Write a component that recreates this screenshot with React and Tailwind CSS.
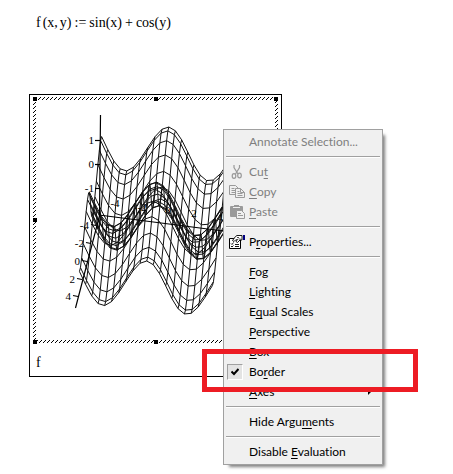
import React, { useState } from "react";

const STEPS = 20;
const Z_UNIT = 24.5;

// corners of the plot floor (z = -2)
const floor = {
  backLeft: [65, 119],
  backRight: [198, 135],
  frontLeft: [45, 207],
  frontRight: [178, 221],
};

const project = (x, y, z) => {
  const u = (y + 5) / 10;
  const v = (x + 5) / 10;
  const mix = (i) =>
    (1 - v) * ((1 - u) * floor.backLeft[i] + u * floor.backRight[i]) +
    v * ((1 - u) * floor.frontLeft[i] + u * floor.frontRight[i]);
  const rise = (z + 2) * Z_UNIT;
  return [mix(0) + rise * 0.045, mix(1) - rise];
};

const toPoints = (list) =>
  list.map(([a, b]) => `${a.toFixed(2)},${b.toFixed(2)}`).join(" ");

const range = Array.from({ length: STEPS + 1 }, (_, i) => -5 + (i * 10) / STEPS);
const f = (x, y) => Math.sin(x) + Math.cos(y);

const meshLines = [
  ...range.map((x) => toPoints(range.map((y) => project(x, y, f(x, y))))),
  ...range.map((y) => toPoints(range.map((x) => project(x, y, f(x, y))))),
];

const zTicks = [
  { label: "1", x: 67, y: 43 },
  { label: "0", x: 67, y: 67 },
  { label: "-1", x: 67, y: 91 },
];

const sideTicks = [
  { label: "-4", x: 63, y: 128 },
  { label: "-2", x: 58, y: 146 },
  { label: "0", x: 54, y: 164 },
  { label: "2", x: 49, y: 182 },
  { label: "4", x: 45, y: 199 },
];

const innerTicks = [
  { label: "-4", x: 82, y: 110 },
  { label: "-2", x: 109, y: 114 },
  { label: "0", x: 135, y: 117 },
  { label: "2", x: 161, y: 120 },
  { label: "4", x: 187, y: 124 },
];

const handles = [
  [0, 0], [121, 0], [241, 0],
  [0, 121], [241, 121],
  [0, 243], [121, 243], [241, 243],
];

const SurfacePlot = () => (
  <svg width="245" height="247" viewBox="0 0 245 247" className="block" role="img" aria-label="f">
    <defs>
      <pattern id="hatch" width="4" height="4" patternUnits="userSpaceOnUse">
        <path d="M3 0h1v1h-1zM2 1h1v1h-1zM1 2h1v1h-1zM0 3h1v1h-1z" fill="#000" />
      </pattern>
    </defs>
    <path
      d="M0 0H245V246H0ZM3 3V243H242V3Z"
      fill="url(#hatch)"
      fillRule="evenodd"
      shapeRendering="crispEdges"
    />
    <g shapeRendering="crispEdges">
      {handles.map(([x, y]) => (
        <rect key={`${x}-${y}`} x={x} y={y} width="4" height="4" />
      ))}
    </g>
    <g fill="none" stroke="#111" strokeWidth="1">
      {meshLines.map((points, i) => (
        <polyline key={i} points={points} />
      ))}
    </g>
    <g fill="none" stroke="#000" strokeWidth="1.2">
      <path d="M67.5 18L66.5 119L42.5 211" />
      <path d="M66 118L198 135" />
      {zTicks.map((t) => (
        <path key={t.label} d={`M${t.x - 5} ${t.y + 0.5}h5`} />
      ))}
      {sideTicks.map((t) => (
        <path key={t.label} d={`M${t.x - 5} ${t.y - 0.5}l5 1`} />
      ))}
    </g>
    <g className="font-['Liberation_Serif',serif] text-[11px]" fill="#000">
      {zTicks.map((t) => (
        <text key={t.label} x={t.x - 6} y={t.y + 4} textAnchor="end">{t.label}</text>
      ))}
      {sideTicks.map((t) => (
        <text key={t.label} x={t.x - 7} y={t.y + 4} textAnchor="end">{t.label}</text>
      ))}
      {innerTicks.map((t) => (
        <text key={t.label} x={t.x} y={t.y} textAnchor="middle">{t.label}</text>
      ))}
    </g>
  </svg>
);

const CutIcon = () => (
  <svg width="16" height="16" viewBox="0 0 16 16" fill="none" stroke="#9a9a9a" strokeWidth="1.2">
    <path d="M5 1v2.5L9 10M10.500 1v2.500L6.500 10" />
    <ellipse cx="5" cy="12" rx="1.800" ry="2.300" />
    <ellipse cx="10.500" cy="11.500" rx="1.800" ry="2.300" />
  </svg>
);

const CopyIcon = () => (
  <svg width="16" height="16" viewBox="0 0 16 16" fill="#f0f0f0" stroke="#9a9a9a">
    <path d="M.5 1.500h6l3 3v6h-9z" />
    <path d="M2.500 4.500h3M2.500 6.500h4M2.500 8.500h4" />
    <path d="M6.500 4.500h5l4 4v5h-9z" />
    <path d="M11.500 4.500v4h4M8.500 7.500h2M8.500 9.500h5M8.500 11.500h5" fill="none" />
  </svg>
);

const PasteIcon = () => (
  <svg width="16" height="16" viewBox="0 0 16 16">
    <path d="M2 2h3V1h5v1h3q1 0 1 1v9q0 1-1 1H2q-1 0-1-1V3q0-1 1-1z" fill="#9a9a9a" />
    <path d="M4 3.500h7" stroke="#f0f0f0" />
    <path d="M7.500 6.500h5l3 3v5h-8z" fill="#f0f0f0" stroke="#9a9a9a" />
    <path d="M9 9.500h3M9 11.500h5" stroke="#9a9a9a" />
  </svg>
);

const PropertiesIcon = () => (
  <svg width="16" height="16" viewBox="0 0 16 16">
    <path d="M.5 4.500h11v10H.5z" fill="#fff" stroke="#000" />
    <path d="M2 9.500l1 1 1.500-2M6 10.500h4M2 12l1 1 1.500-1.500M6 12.500h4" fill="none" stroke="#000" strokeWidth="0.9" />
    <path d="M3.500 6.500l3-4 1.500-1h5v4.500h-2l-2.500 2.500-1.500-1 1.500-2-2 .5-1.500 1.500z" fill="#fff" stroke="#000" strokeWidth="0.9" />
    <path d="M8 3.500h2M9.500 5h2" stroke="#000" strokeWidth="0.7" />
    <path d="M14 1h2v5h-2z" fill="#00007f" />
  </svg>
);

const CheckMark = () => (
  <span className="flex size-4 items-center justify-center border border-t-[#a0a0a0] border-l-[#a0a0a0] border-r-white border-b-white bg-[#e3e3e3]">
    <svg width="8" height="8" viewBox="0 0 8 8" fill="none" stroke="#000" strokeWidth="2">
      <path d="M.5 3.500L3 6L7.500 1" />
    </svg>
  </span>
);

const Separator = () => (
  <div role="separator" className="flex h-[10px] items-center px-[2px]">
    <div className="h-[2px] flex-1 border-t border-[#a0a0a0] bg-white" />
  </div>
);

// "&" marks the access key, as in "Cu&t"
const MenuItem = ({ text, icon, disabled, checkable, checked, submenu, onClick, children }) => {
  const at = text.indexOf("&");
  return (
    <div className="relative">
      <button
        type="button"
        role={checkable ? "menuitemcheckbox" : "menuitem"}
        aria-checked={checkable ? checked : undefined}
        disabled={disabled}
        onClick={onClick}
        className="flex h-5 w-full items-center pr-2 pl-[3px] text-left text-black disabled:text-[#7f7f7f]"
      >
        <span className="flex w-[22px] items-center">
          {checked ? <CheckMark /> : <span className="pl-[2px]">{icon}</span>}
        </span>
        <span className="flex-1">
          {at < 0 ? text : (
            <>
              {text.slice(0, at)}
              <u className="underline-offset-2">{text[at + 1]}</u>
              {text.slice(at + 2)}
            </>
          )}
        </span>
        {submenu && (
          <svg width="4" height="6" viewBox="0 0 4 6" className="mr-[2px]">
            <path d="M0 0l3 3-3 3z" />
          </svg>
        )}
      </button>
      {children}
    </div>
  );
};

const ContextMenu = () => {
  const [border, setBorder] = useState(true);

  return (
    <div
      role="menu"
      className="absolute top-[34px] left-[193px] w-40 border border-[#a0a0a0] bg-[#f0f0f0] py-[2px] font-['Lato','Open_Sans',sans-serif] text-[12px] leading-5 shadow-[4px_4px_3px_-2px_rgba(0,0,0,0.5)] [font-variant-ligatures:none]"
    >
      <MenuItem text="Annotate Selection..." disabled />
      <Separator />
      <MenuItem text="Cu&t" icon={<CutIcon />} disabled />
      <MenuItem text="&Copy" icon={<CopyIcon />} disabled />
      <MenuItem text="&Paste" icon={<PasteIcon />} disabled />
      <Separator />
      <MenuItem text="P&roperties..." icon={<PropertiesIcon />} />
      <Separator />
      <MenuItem text="&Fog" />
      <MenuItem text="&Lighting" />
      <MenuItem text="E&qual Scales" />
      <MenuItem text="&Perspective" />
      <MenuItem text="&Box" />
      <MenuItem text="Bo&rder" checkable checked={border} onClick={() => setBorder(!border)}>
        <div className="pointer-events-none absolute -top-[13px] -left-[22px] z-10 h-[43px] w-[216px] border-5 border-[#ed1c24]" />
      </MenuItem>
      <MenuItem text="&Axes" submenu />
      <Separator />
      <MenuItem text="Hide Argu&ments" />
      <Separator />
      <MenuItem text="Disable &Evaluation" />
    </div>
  );
};

export default function App() {
  return (
    <main className="min-h-screen bg-white pt-[14px] pb-4 pl-[29px] font-['Liberation_Serif',serif] text-[14px] leading-[18px] text-black">
      <p className="mb-[62px] flex gap-[3px] pl-[7px]">
        <span className="flex gap-[2px]"><span>f</span><span>(x,</span><span>y)</span></span>
        <span>:=</span>
        <span>sin(x)</span>
        <span>+</span>
        <span>cos(y)</span>
      </p>
      <div className="relative w-fit border border-black px-[3px] pt-[2px] pb-1">
        <SurfacePlot />
        <p className="pt-[10px] pl-[3px]">f</p>
        <ContextMenu />
      </div>
    </main>
  );
}
